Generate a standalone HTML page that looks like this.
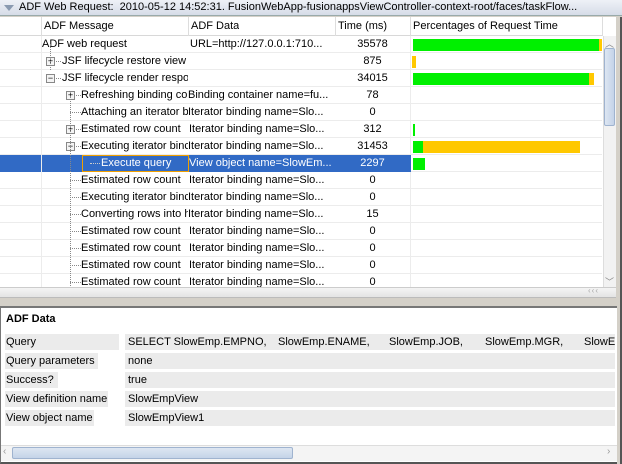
<!DOCTYPE html>
<html><head><style>
*{margin:0;padding:0;box-sizing:border-box}
body{width:622px;height:464px;background:#d4d0c8;position:relative;overflow:hidden;font-family:"Liberation Sans","DejaVu Sans",sans-serif;font-size:11px;color:#000}
.a{position:absolute;white-space:nowrap;overflow:hidden}
.row{position:absolute;left:0;width:602px;height:17px;border-bottom:1px solid #ececec;background:#fff}
.c{position:absolute;top:0;height:17px;line-height:16px;white-space:nowrap;overflow:hidden}
.box{position:absolute;width:9px;height:9px;border:1px solid #888;background:#f4f4f4;font-size:9px;line-height:7px;text-align:center;top:4px}
.hl{position:absolute;border-top:1px dotted #888;height:0;top:8px}
.vl{position:absolute;border-left:1px dotted #888;width:0}
.bar{position:absolute;top:3px;height:12px}
.g{background:#00f000}.y{background:#ffc800}
.lb{position:absolute;left:5px;height:16px;line-height:16px;background:#ebebeb;padding-left:1px;white-space:nowrap}
.vb{position:absolute;left:125px;width:490px;height:16px;line-height:16px;background:#ebebeb;padding-left:3px;white-space:nowrap;overflow:hidden}
</style></head><body>
<div class="a" style="left:0;top:0;width:622px;height:16px;background:linear-gradient(#eef1f7,#d6dce8);border-bottom:1px solid #9aa;line-height:15px;padding-left:19px">ADF Web Request:&nbsp; 2010-05-12 14:52:31. FusionWebApp-fusionappsViewController-context-root/faces/taskFlow...</div>
<div class="a" style="left:4px;top:5px;width:0;height:0;border-left:5px solid transparent;border-right:5px solid transparent;border-top:6px solid #8a9ab0"></div>
<div class="a" style="left:0;top:17px;width:616px;height:270px;background:#fff"></div>
<div class="a" style="left:0;top:17px;width:603px;height:19px;background:#fff;border-bottom:1px solid #d8d8d8"></div>
<div class="a" style="left:41px;top:17px;width:1px;height:19px;background:#ddd"></div>
<div class="a" style="left:188px;top:17px;width:1px;height:19px;background:#ddd"></div>
<div class="a" style="left:335px;top:17px;width:1px;height:19px;background:#ddd"></div>
<div class="a" style="left:410px;top:17px;width:1px;height:19px;background:#ddd"></div>
<div class="a" style="left:602px;top:17px;width:1px;height:19px;background:#ddd"></div>
<div class="a" style="left:44px;top:17px;line-height:19px">ADF Message</div>
<div class="a" style="left:191px;top:17px;line-height:19px">ADF Data</div>
<div class="a" style="left:338px;top:17px;line-height:19px">Time (ms)</div>
<div class="a" style="left:413px;top:17px;line-height:19px">Percentages of Request Time</div>

<div class="a" style="left:0;top:36px;width:603px;height:251px">
<div class="row" style="top:0"><div class="c" style="left:42px;width:146px">ADF web request</div><div class="c" style="left:190px;width:145px">URL=http://127.0.0.1:710...</div><div class="c" style="left:335px;width:75px;text-align:center">35578</div><div class="bar g" style="left:413px;width:186px"></div><div class="bar y" style="left:599px;width:3px"></div></div>
<div class="row" style="top:17px"><div class="hl" style="left:50px;width:11px"></div><div class="box" style="left:46px">+</div><div class="c" style="left:62px;width:126px">JSF lifecycle restore view p</div><div class="c" style="left:335px;width:75px;text-align:center">875</div><div class="bar y" style="left:412px;width:4px"></div></div>
<div class="row" style="top:34px"><div class="hl" style="left:50px;width:11px"></div><div class="box" style="left:46px">−</div><div class="c" style="left:62px;width:126px">JSF lifecycle render respor</div><div class="c" style="left:335px;width:75px;text-align:center">34015</div><div class="bar g" style="left:413px;width:176px"></div><div class="bar y" style="left:589px;width:5px"></div></div>
<div class="row" style="top:51px"><div class="hl" style="left:70px;width:11px"></div><div class="box" style="left:66px">+</div><div class="c" style="left:81px;width:107px">Refreshing binding cor</div><div class="c" style="left:188px;width:147px">Binding container name=fu...</div><div class="c" style="left:335px;width:75px;text-align:center">78</div></div>
<div class="row" style="top:68px"><div class="hl" style="left:70px;width:11px"></div><div class="c" style="left:81px;width:107px">Attaching an iterator b</div><div class="c" style="left:188px;width:147px">Iterator binding name=Slo...</div><div class="c" style="left:335px;width:75px;text-align:center">0</div></div>
<div class="row" style="top:85px"><div class="hl" style="left:70px;width:11px"></div><div class="box" style="left:66px">+</div><div class="c" style="left:81px;width:107px">Estimated row count</div><div class="c" style="left:189px;width:146px">Iterator binding name=Slo...</div><div class="c" style="left:335px;width:75px;text-align:center">312</div><div class="bar g" style="left:413px;width:2px"></div></div>
<div class="row" style="top:102px"><div class="hl" style="left:70px;width:11px"></div><div class="box" style="left:66px">−</div><div class="c" style="left:81px;width:107px">Executing iterator binc</div><div class="c" style="left:188px;width:147px">Iterator binding name=Slo...</div><div class="c" style="left:335px;width:75px;text-align:center">31453</div><div class="bar g" style="left:413px;width:10px"></div><div class="bar y" style="left:423px;width:157px"></div></div>
<div class="row" style="top:119px;background:#fff"><div class="a" style="left:0;top:0;width:411px;height:17px;background:#316ac5"></div><div class="a" style="left:82px;top:0;width:107px;height:17px;border:1px solid #f0a000"></div><div class="hl" style="left:90px;width:10px;border-color:#ccc"></div><div class="c" style="left:101px;width:87px;color:#fff">Execute query</div><div class="c" style="left:189px;width:146px;color:#fff">View object name=SlowEm...</div><div class="c" style="left:335px;width:75px;text-align:center;color:#fff">2297</div><div class="bar g" style="left:413px;width:12px"></div></div>
<div class="row" style="top:136px"><div class="hl" style="left:70px;width:11px"></div><div class="c" style="left:81px;width:107px">Estimated row count</div><div class="c" style="left:189px;width:146px">Iterator binding name=Slo...</div><div class="c" style="left:335px;width:75px;text-align:center">0</div></div>
<div class="row" style="top:153px"><div class="hl" style="left:70px;width:11px"></div><div class="c" style="left:81px;width:107px">Executing iterator binc</div><div class="c" style="left:188px;width:147px">Iterator binding name=Slo...</div><div class="c" style="left:335px;width:75px;text-align:center">0</div></div>
<div class="row" style="top:170px"><div class="hl" style="left:70px;width:11px"></div><div class="c" style="left:81px;width:107px">Converting rows into h</div><div class="c" style="left:188px;width:147px">Iterator binding name=Slo...</div><div class="c" style="left:335px;width:75px;text-align:center">15</div></div>
<div class="row" style="top:187px"><div class="hl" style="left:70px;width:11px"></div><div class="c" style="left:81px;width:107px">Estimated row count</div><div class="c" style="left:189px;width:146px">Iterator binding name=Slo...</div><div class="c" style="left:335px;width:75px;text-align:center">0</div></div>
<div class="row" style="top:204px"><div class="hl" style="left:70px;width:11px"></div><div class="c" style="left:81px;width:107px">Estimated row count</div><div class="c" style="left:189px;width:146px">Iterator binding name=Slo...</div><div class="c" style="left:335px;width:75px;text-align:center">0</div></div>
<div class="row" style="top:221px"><div class="hl" style="left:70px;width:11px"></div><div class="c" style="left:81px;width:107px">Estimated row count</div><div class="c" style="left:189px;width:146px">Iterator binding name=Slo...</div><div class="c" style="left:335px;width:75px;text-align:center">0</div></div>
<div class="row" style="top:238px"><div class="hl" style="left:70px;width:11px"></div><div class="c" style="left:81px;width:107px">Estimated row count</div><div class="c" style="left:189px;width:146px">Iterator binding name=Slo...</div><div class="c" style="left:335px;width:75px;text-align:center">0</div></div>
<div class="vl" style="left:50px;top:8px;height:26px"></div>
<div class="vl" style="left:70px;top:60px;height:200px"></div>
<div class="a" style="left:41px;top:0;width:1px;height:251px;background:#ececec"></div>
<div class="a" style="left:410px;top:0;width:1px;height:119px;background:#ececec"></div>
<div class="a" style="left:410px;top:136px;width:1px;height:115px;background:#ececec"></div>
</div>
<div class="a" style="left:603px;top:36px;width:13px;height:251px;background:#f2f2f2;border-left:1px solid #ddd"></div>
<div class="a" style="left:604px;top:48px;width:11px;height:78px;background:linear-gradient(90deg,#dde6f2,#c4d3e8);border:1px solid #9fb3cf;border-radius:2px"></div>
<div class="a" style="left:605px;top:37px;font-size:9px;color:#888">︿</div>
<div class="a" style="left:605px;top:275px;font-size:9px;color:#888">﹀</div>
<div class="a" style="left:0;top:287px;width:616px;height:11px;background:linear-gradient(#f4f4f4,#e4e4e4);border-top:1px solid #ccc;border-bottom:1px solid #bbb"></div>
<div class="a" style="left:588px;top:286px;font-size:8px;color:#aaa;letter-spacing:1px">‹‹‹</div>
<div class="a" style="left:616px;top:17px;width:6px;height:447px;background:#d4d0c8;border-right:2px solid #555"></div>
<div class="a" style="left:0;top:306px;width:617px;height:158px;background:#fff;border-top:2px solid #777;border-left:1px solid #777;border-bottom:2px solid #555"></div>
<div class="a" style="left:6px;top:311px;font-weight:bold;line-height:16px">ADF Data</div>
<div class="lb" style="top:334px;width:114px">Query</div>
<div class="vb" style="top:334px"><span class="a" style="left:3px;top:0">SELECT SlowEmp.EMPNO,</span><span class="a" style="left:153px;top:0">SlowEmp.ENAME,</span><span class="a" style="left:264px;top:0">SlowEmp.JOB,</span><span class="a" style="left:360px;top:0">SlowEmp.MGR,</span><span class="a" style="left:459px;top:0">SlowEmp</span></div>
<div class="lb" style="top:353px;width:93px">Query parameters</div><div class="vb" style="top:353px">none</div>
<div class="lb" style="top:372px;width:53px">Success?</div><div class="vb" style="top:372px">true</div>
<div class="lb" style="top:391px;width:103px">View definition name</div><div class="vb" style="top:391px">SlowEmpView</div>
<div class="lb" style="top:410px;width:89px">View object name</div><div class="vb" style="top:410px">SlowEmpView1</div>
<div class="a" style="left:1px;top:445px;width:616px;height:16px;background:#f4f4f4;border-top:1px solid #ddd"></div>
<div class="a" style="left:12px;top:447px;width:281px;height:12px;background:linear-gradient(#dde6f2,#c4d3e8);border:1px solid #9fb3cf;border-radius:2px"></div>
<div class="a" style="left:3px;top:446px;color:#999;font-size:10px">‹</div>
<div class="a" style="left:607px;top:446px;color:#999;font-size:10px">›</div>
</body></html>
